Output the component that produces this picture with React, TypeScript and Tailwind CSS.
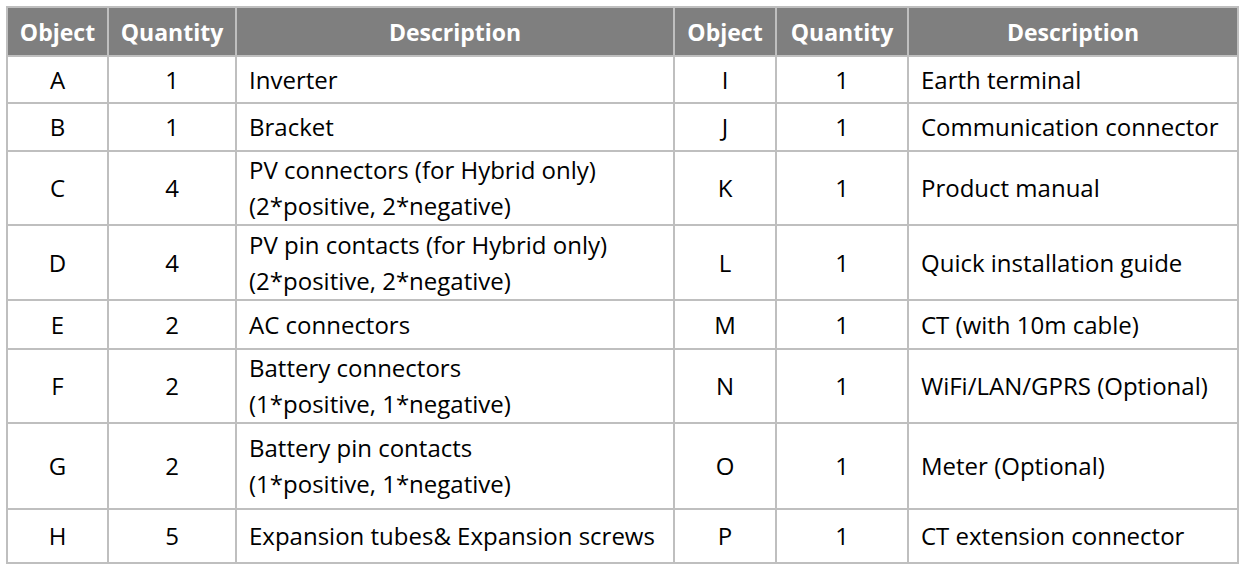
import React from "react";

type Row = { h: number; a: [string, string, string[]]; b: [string, string, string] };

const rows: Row[] = [
  { h: 47, a: ["A", "1", ["Inverter"]], b: ["I", "1", "Earth terminal"] },
  { h: 48, a: ["B", "1", ["Bracket"]], b: ["J", "1", "Communication connector"] },
  { h: 74, a: ["C", "4", ["PV connectors (for Hybrid only)", "(2*positive, 2*negative)"]], b: ["K", "1", "Product manual"] },
  { h: 75, a: ["D", "4", ["PV pin contacts (for Hybrid only)", "(2*positive, 2*negative)"]], b: ["L", "1", "Quick installation guide"] },
  { h: 49, a: ["E", "2", ["AC connectors"]], b: ["M", "1", "CT (with 10m cable)"] },
  { h: 74, a: ["F", "2", ["Battery connectors", "(1*positive, 1*negative)"]], b: ["N", "1", "WiFi/LAN/GPRS (Optional)"] },
  { h: 86, a: ["G", "2", ["Battery pin contacts", "(1*positive, 1*negative)"]], b: ["O", "1", "Meter (Optional)"] },
  { h: 54, a: ["H", "5", ["Expansion tubes& Expansion screws"]], b: ["P", "1", "CT extension connector"] },
];

const cell = "border-2 border-[#bfbfbf] p-0 align-middle";
const th = "border-2 border-[#bfbfbf] p-0 align-middle text-center font-bold";

export default function App() {
  return (
    <div className="bg-white w-[1243px] h-[569px] pt-[6px] pl-[6px] text-black" style={{ fontFamily: "'Open Sans', Lato, sans-serif", fontVariantLigatures: "none" }}>
      <table className="table-fixed border-collapse w-[1231px] text-[24px] leading-[36px]">
        <colgroup>
          <col className="w-[101px]" />
          <col className="w-[128px]" />
          <col className="w-[438px]" />
          <col className="w-[102px]" />
          <col className="w-[132px]" />
          <col className="w-[330px]" />
        </colgroup>
        <thead>
          <tr className="h-[49px] bg-[#7f7f7f] text-white text-[23px]">
            <th className={th}>Object</th>
            <th className={th}>Quantity</th>
            <th className={th}>Description</th>
            <th className={th}>Object</th>
            <th className={th}>Quantity</th>
            <th className={th}>Description</th>
          </tr>
        </thead>
        <tbody>
          {rows.map((r, i) => (
            <tr key={i} style={{ height: r.h }}>
              <td className={cell + " text-center"}>{r.a[0]}</td>
              <td className={cell + " text-center"}>{r.a[1]}</td>
              <td className={cell + " pl-[12px] whitespace-nowrap"}>
                {r.a[2].map((t, j) => (
                  <div key={j}>{t}</div>
                ))}
              </td>
              <td className={cell + " text-center"}>{r.b[0]}</td>
              <td className={cell + " text-center"}>{r.b[1]}</td>
              <td className={cell + " pl-[12px] whitespace-nowrap"}>{r.b[2]}</td>
            </tr>
          ))}
        </tbody>
      </table>
    </div>
  );
}
